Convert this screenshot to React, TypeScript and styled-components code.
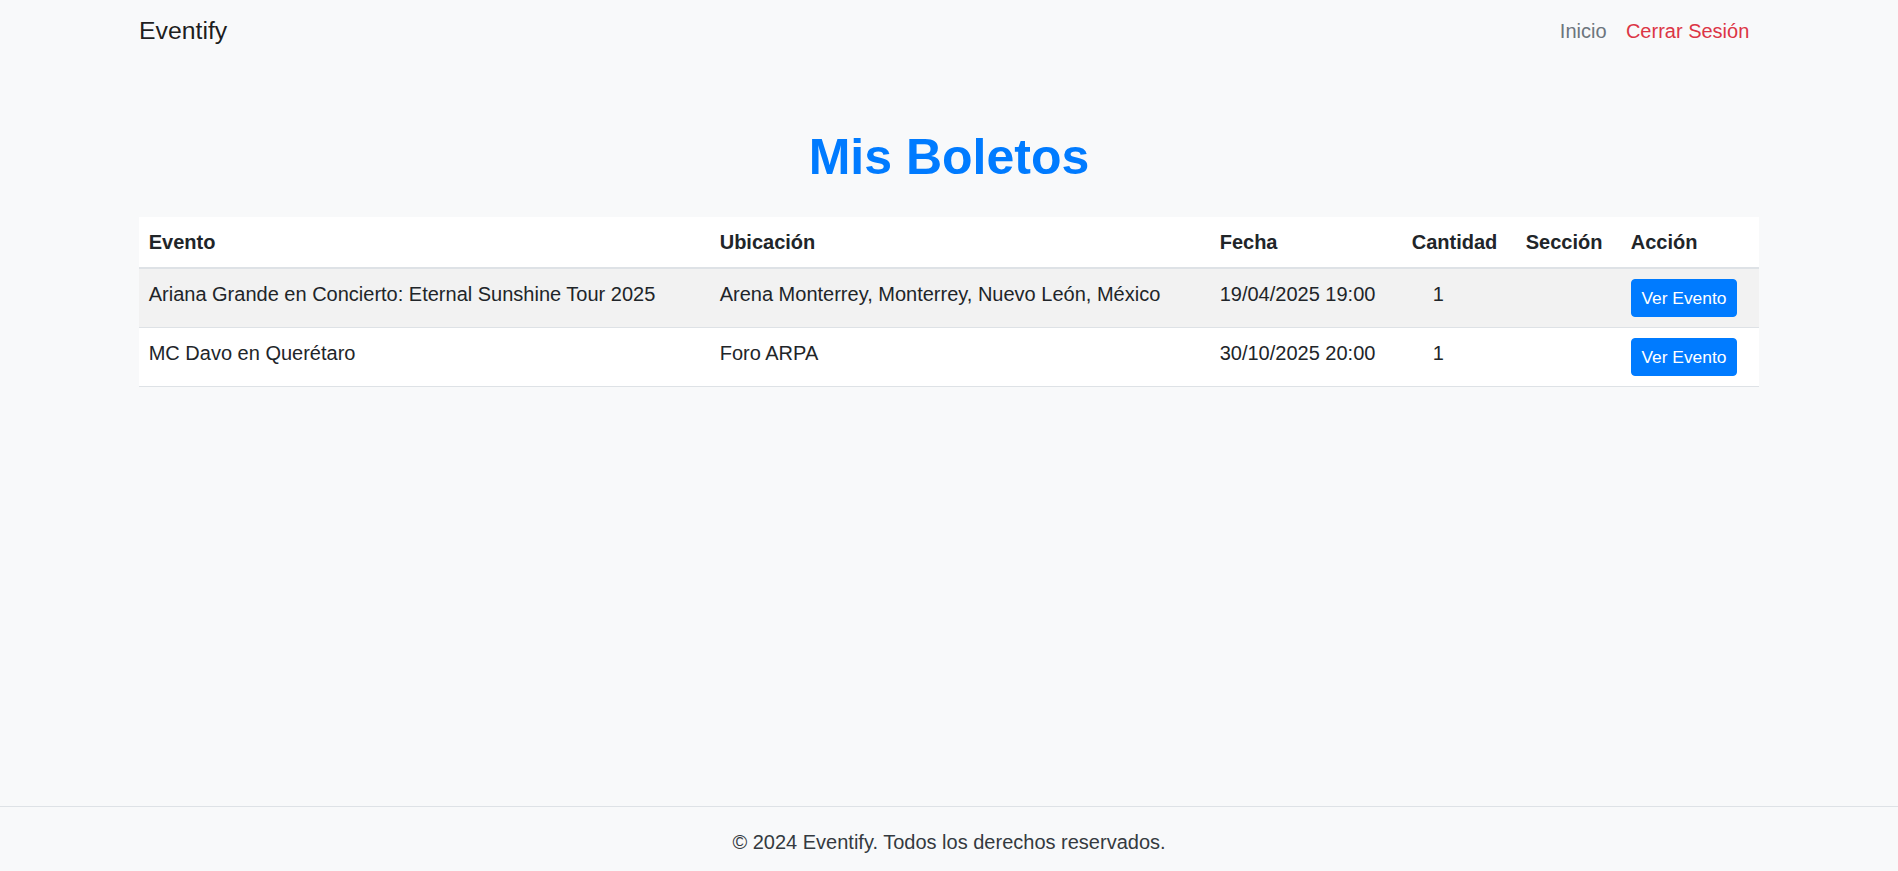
import React from "react";
import styled, { createGlobalStyle } from "styled-components";

const GlobalStyle = createGlobalStyle`
  html, body {
    margin: 0;
    padding: 0;
    background: #f8f9fa;
    font-family: "Liberation Sans", Arial, Helvetica, sans-serif;
    color: #212529;
  }
  * { box-sizing: border-box; }
`;

const Page = styled.div`
  min-height: 100vh;
  display: flex;
  flex-direction: column;
`;

const Container = styled.div`
  width: 1620px;
  margin: 0 auto;
`;

const NavBar = styled.nav`
  padding: 13px 0;
`;

const NavInner = styled(Container)`
  display: flex;
  align-items: center;
  justify-content: space-between;
`;

const Brand = styled.a`
  font-size: 24.8px;
  line-height: 36px;
  color: rgba(0, 0, 0, 0.9);
  text-decoration: none;
`;

const NavLinks = styled.div`
  display: flex;
  align-items: center;
`;

const NavLink = styled.a<{ $danger?: boolean }>`
  font-size: 20px;
  line-height: 30px;
  padding: 0 9.7px;
  text-decoration: none;
  color: ${(p) => (p.$danger ? "#dc3545" : "#6c757d")};
  cursor: pointer;
`;

const Main = styled.main`
  flex: 1;
  padding-top: 65px;
`;

const Title = styled.h1`
  margin: 0 0 30px;
  text-align: center;
  font-size: 50px;
  line-height: 60px;
  font-weight: 700;
  color: #007bff;
`;

const Table = styled.table`
  width: 100%;
  border-collapse: collapse;
  table-layout: fixed;
  background: #fff;
  font-size: 20px;
  line-height: 30px;
`;

const Th = styled.th<{ $w: number }>`
  width: ${(p) => p.$w}px;
  text-align: left;
  font-weight: 700;
  padding: 10px 9.7px;
  border-bottom: 2px solid #dee2e6;
  vertical-align: bottom;
  color: #212529;
`;

const Row = styled.tr<{ $striped?: boolean }>`
  background: ${(p) => (p.$striped ? "#f2f2f2" : "transparent")};
  border-bottom: 1px solid #dee2e6;
`;

const Td = styled.td<{ $indent?: number }>`
  padding: 10px 9.7px 10px ${(p) => 9.7 + (p.$indent ?? 0)}px;
  vertical-align: top;
  color: #212529;
  white-space: nowrap;
`;

const Button = styled.a`
  display: inline-block;
  font-size: 17.4px;
  line-height: 26px;
  padding: 5px 9.7px;
  border: 1.2px solid #007bff;
  background: #007bff;
  color: #fff;
  border-radius: 4px;
  text-decoration: none;
  vertical-align: top;
  cursor: pointer;
`;

const Footer = styled.footer`
  border-top: 1px solid #dee2e6;
  padding: 20px 0 14px;
  text-align: center;
  font-size: 20px;
  line-height: 30px;
  color: #343a40;
`;

const columns = [
  { label: "Evento", w: 571 },
  { label: "Ubicación", w: 500 },
  { label: "Fecha", w: 192 },
  { label: "Cantidad", w: 114 },
  { label: "Sección", w: 105 },
  { label: "Acción", w: 138 },
];

const tickets = [
  {
    evento: "Ariana Grande en Concierto: Eternal Sunshine Tour 2025",
    ubicacion: "Arena Monterrey, Monterrey, Nuevo León, México",
    fecha: "19/04/2025 19:00",
    cantidad: 1,
    seccion: "",
  },
  {
    evento: "MC Davo en Querétaro",
    ubicacion: "Foro ARPA",
    fecha: "30/10/2025 20:00",
    cantidad: 1,
    seccion: "",
  },
];

export default function App() {
  return (
    <>
      <GlobalStyle />
      <Page>
        <NavBar>
          <NavInner>
            <Brand>Eventify</Brand>
            <NavLinks>
              <NavLink>Inicio</NavLink>
              <NavLink $danger>Cerrar Sesión</NavLink>
            </NavLinks>
          </NavInner>
        </NavBar>
        <Main>
          <Container>
            <Title>Mis Boletos</Title>
            <Table>
              <thead>
                <tr>
                  {columns.map((c) => (
                    <Th key={c.label} $w={c.w}>
                      {c.label}
                    </Th>
                  ))}
                </tr>
              </thead>
              <tbody>
                {tickets.map((t, i) => (
                  <Row key={i} $striped={i % 2 === 0}>
                    <Td>{t.evento}</Td>
                    <Td>{t.ubicacion}</Td>
                    <Td>{t.fecha}</Td>
                    <Td $indent={21}>{t.cantidad}</Td>
                    <Td>{t.seccion}</Td>
                    <Td>
                      <Button>Ver Evento</Button>
                    </Td>
                  </Row>
                ))}
              </tbody>
            </Table>
          </Container>
        </Main>
        <Footer>© 2024 Eventify. Todos los derechos reservados.</Footer>
      </Page>
    </>
  );
}
